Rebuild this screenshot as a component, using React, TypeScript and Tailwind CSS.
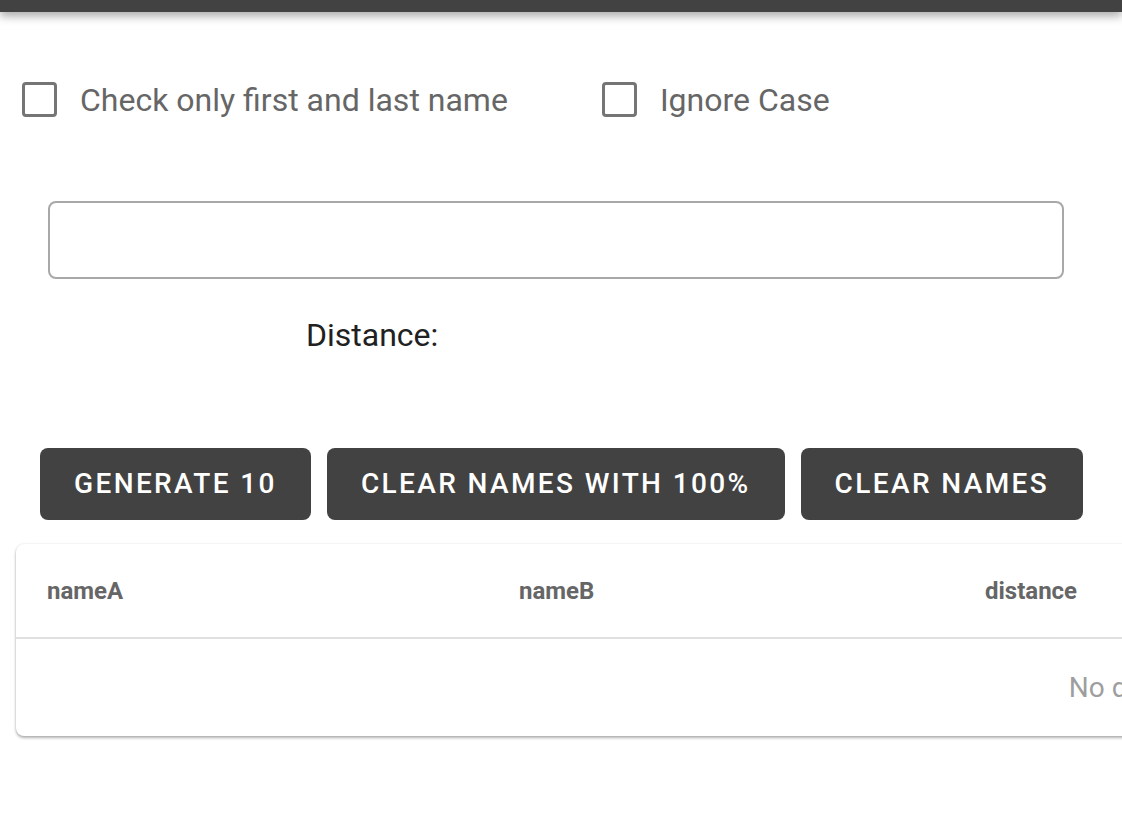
export default function App() {
  const checkboxes = ["Check only first and last name", "Ignore Case"];

  return (
    <div className="w-[1122px] h-[818px] overflow-hidden bg-white font-['Roboto',sans-serif]">
      <div className="h-3 bg-[#424242] shadow-[0_4px_10px_rgba(0,0,0,0.35)]" />

      <div className="flex items-center gap-[94px] pl-[22px] mt-[70px]">
        {checkboxes.map((label) => (
          <label key={label} className="flex items-center gap-[23px]">
            <span className="w-[35px] h-[35px] rounded-[4px] border-[3px] border-[#757575]" />
            <span className="text-[32px] text-[#666666] leading-none">{label}</span>
          </label>
        ))}
      </div>

      <div className="ml-[48px] mt-[84px] w-[1016px] h-[78px] rounded-[8px] border-2 border-[#a8a8a8]" />

      <div className="ml-[306px] mt-[40px] text-[32px] leading-none text-[#212121]">Distance:</div>

      <div className="flex gap-4 pl-10 mt-[97px]">
        {["Generate 10", "Clear names with 100%", "Clear names"].map((t) => (
          <button
            key={t}
            className="h-[72px] px-[34px] rounded-[8px] bg-[#424242] text-white uppercase text-[28px] font-medium tracking-[2.38px]"
          >
            {t}
          </button>
        ))}
      </div>

      <div className="ml-4 mt-6 w-[2204px] rounded-[8px] bg-white shadow-[0_2px_3px_rgba(0,0,0,0.3),0_0_2px_rgba(0,0,0,0.12)]">
        <div className="grid grid-cols-[471px_466px_466px_1fr] h-[95px] items-center border-b-2 border-[#e0e0e0] text-[24px] font-bold text-[#666666]">
          <div className="pl-[31px]">nameA</div>
          <div className="pl-[32px]">nameB</div>
          <div className="pl-[32px]">distance</div>
          <div />
        </div>
        <div className="h-[97px] flex items-center justify-center text-[28px] text-[#9e9e9e]">No data</div>
      </div>
    </div>
  );
}
